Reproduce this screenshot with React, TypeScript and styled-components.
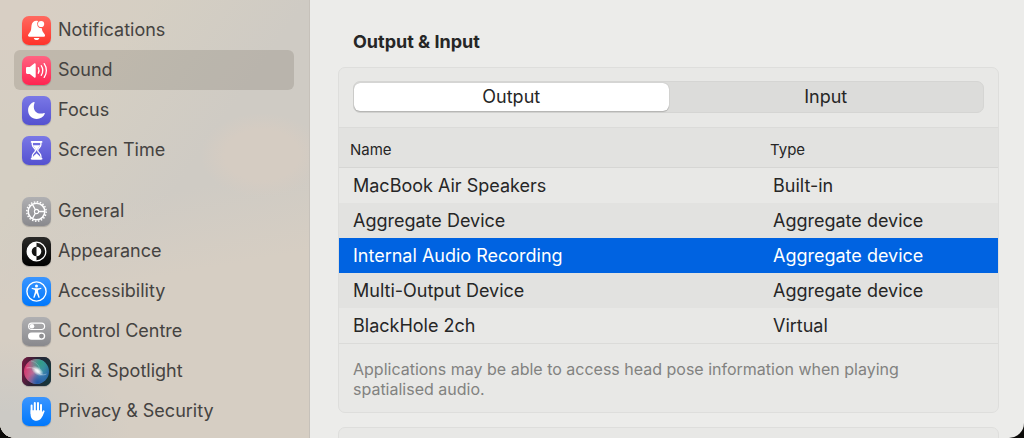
import React, { useState } from "react";
import styled, { createGlobalStyle } from "styled-components";

const GlobalStyle = createGlobalStyle`
  *, *::before, *::after { box-sizing: border-box; }
  html, body { margin: 0; background: #0b0a08; }
  body {
    font-family: Inter, "Liberation Sans", sans-serif;
    -webkit-font-smoothing: antialiased;
  }
`;

const Window = styled.div`
  display: flex;
  height: 100vh;
  overflow: hidden;
  border-radius: 0 0 15px 15px;
  background: #ececea;
`;

const Sidebar = styled.nav`
  flex: 0 0 310px;
  display: flex;
  flex-direction: column;
  gap: 21px;
  padding: 10px 15px 0 14px;
  border-right: 1px solid #c6c1ba;
  background:
    radial-gradient(ellipse 62px 42px at 262px 155px, #d5ccc2 0 60%, transparent 100%),
    radial-gradient(ellipse 130px 90px at 0 430px, #cccac5 0 20%, transparent 100%),
    radial-gradient(ellipse 170px 130px at 0 0, #d8cfc4 0 20%, transparent 100%),
    linear-gradient(170deg, transparent 0 45%, #d6cec3 62% 100%),
    linear-gradient(125deg, #d5cfc3 0 25%, #cfcbc4 50%);
`;

const NavGroup = styled.ul`
  margin: 0;
  padding: 0;
  list-style: none;
`;

const NavLink = styled.a<{ $active: boolean }>`
  display: flex;
  align-items: center;
  gap: 7px;
  height: 40px;
  padding: 0 8px;
  border-radius: 6px;
  background: ${(p) => (p.$active ? "rgba(60, 52, 40, 0.15)" : "transparent")};
  color: #454341;
  font-size: 18px;
  line-height: 24px;
  text-decoration: none;
  white-space: nowrap;
`;

const IconTile = styled.span<{ $from: string; $to: string }>`
  display: block;
  flex: none;
  width: 29px;
  height: 29px;
  overflow: hidden;
  border-radius: 7px;
  background: linear-gradient(${(p) => p.$from}, ${(p) => p.$to});
  box-shadow: 0 1px 1px rgba(0, 0, 0, 0.2);

  svg { display: block; }
`;

const Content = styled.main`
  flex: 1;
  min-width: 0;
  display: flex;
  flex-direction: column;
  padding: 30px 25px 0 28px;
`;

const Heading = styled.h2`
  margin: 0 0 13px 15px;
  color: #262626;
  font-size: 18px;
  font-weight: 700;
  line-height: 24px;
`;

const Card = styled.section`
  flex: none;
  margin-bottom: 14px;
  min-height: 48px;
  border: 1px solid #dededc;
  border-radius: 7px;
  background: #e8e8e6;
`;

const Segments = styled.div`
  display: flex;
  height: 32px;
  margin: 13px 14px 14px;
  padding: 1px 0;
  border: 1px solid #d5d5d3;
  border-radius: 7px;
  background: #dcdcda;
`;

const Segment = styled.button<{ $active: boolean }>`
  flex: 1;
  padding: 0;
  border: 0;
  border-radius: 6px;
  background: ${(p) => (p.$active ? "#fff" : "transparent")};
  box-shadow: ${(p) => (p.$active ? "0 0 1px rgba(0, 0, 0, 0.3), 0 1px 1px rgba(0, 0, 0, 0.16)" : "none")};
  color: #262626;
  font: inherit;
  font-size: 18px;
  line-height: 24px;
`;

const DeviceTable = styled.table`
  width: 100%;
  table-layout: fixed;
  border-collapse: separate;
  border-spacing: 0;
  text-align: left;
`;

const HeaderCell = styled.th<{ $width?: string }>`
  width: ${(p) => p.$width ?? "auto"};
  height: 41px;
  padding: 4px 11px 0;
  border-top: 1px solid #dbdbd9;
  border-bottom: 1px solid #d6d6d4;
  background: #e2e2e0;
  color: #262626;
  font-size: 15px;
  font-weight: 400;
  line-height: 20px;
`;

const DeviceRow = styled.tr<{ $selected: boolean }>`
  background: ${(p) => (p.$selected ? "#0063e1" : "transparent")};
  color: ${(p) => (p.$selected ? "#fff" : "#262626")};

  &:nth-child(even) { background: ${(p) => (p.$selected ? "#0063e1" : "#e2e2e0")}; }
`;

const Cell = styled.td`
  height: 35px;
  padding: 1px 14px 0;
  font-size: 18px;
  line-height: 24px;
`;

const Note = styled.p`
  margin: 0;
  padding: 15px 88px 13px 14px;
  border-top: 1px solid #dbdbd9;
  color: #828280;
  font-size: 16px;
  line-height: 20px;
`;

const Svg = ({ children }: { children: React.ReactNode }) => (
  <svg width="29" height="29" viewBox="0 0 29 29" fill="none" aria-hidden="true">
    {children}
  </svg>
);

const BellIcon = () => (
  <Svg>
    <path
      fill="#fff"
      d="M14.5 4.8c-2.6 0-4.7 2-5 4.8l-.4 4c-.2 1.700-.9 2.500-1.900 3.600-.8.900-1.200 1.500-1.200 2.300 0 .8.500 1.200 1.300 1.200h14.500c.8 0 1.300-.4 1.300-1.200 0-.8-.4-1.400-1.200-2.300-1-1.100-1.700-1.900-1.900-3.600l-.1-1.400a4.300 4.300 0 0 1-3.700-7.200 5 5 0 0 0-1.700-.2z"
    />
    <circle cx="19.100" cy="8" r="3.100" fill="#fff" />
    <path fill="#fff" d="M11.800 21.900h5.600c-.3 1.400-1.400 2.200-2.800 2.200s-2.500-.8-2.800-2.200z" />
  </Svg>
);

const SpeakerIcon = () => (
  <Svg>
    <path
      fill="#fff"
      d="M4 12.400c0-.8.500-1.300 1.300-1.300h2.500l4.400-3.600c.7-.6 1.500-.2 1.500.7v12.600c0 .9-.8 1.300-1.500.7l-4.400-3.600H5.300c-.8 0-1.300-.5-1.300-1.300z"
    />
    <g stroke="#fff" strokeWidth="1.300" strokeLinecap="round">
      <path d="M16.300 11.800c.9 1.600.9 3.800 0 5.400" />
      <path d="M19.200 9.700c1.900 2.800 1.900 6.800 0 9.600" />
      <path d="M22.200 7.600c2.900 4 2.900 9.800 0 13.800" />
    </g>
  </Svg>
);

const MoonIcon = () => (
  <Svg>
    <path
      fill="#fff"
      d="M11.900 6.100c.5-.2.9.2.7.7-.6 1.300-.8 2.500-.8 3.900 0 4.200 2.800 6.900 7 6.900 1.200 0 2.400-.2 3.300-.6.500-.2.900.2.700.7-1.300 3.200-4.400 5.200-8 5.200-5 0-8.700-3.700-8.700-8.600 0-3.700 2.300-6.900 5.800-8.200z"
    />
  </Svg>
);

const HourglassIcon = () => (
  <Svg>
    <path
      stroke="#fff"
      strokeWidth="1.300"
      strokeLinejoin="round"
      d="M10.300 6v2.800c0 2.600 3.200 3.800 3.200 5.600s-3.200 3-3.200 5.600v2.800h8.600V20c0-2.600-3.200-3.800-3.200-5.600s3.200-3 3.200-5.600V6z"
    />
    <path stroke="#fff" strokeWidth="1.700" strokeLinecap="round" d="M9.600 5.900h10M9.600 22.700h10" />
    <path fill="#fff" d="M11 9.300h7.200c-.6 2-2.900 2.900-3.100 5.100h-1c-.2-2.200-2.500-3.100-3.100-5.100zM14.600 17.200c1 1.800 3.500 2 3.700 4.700h-7.400c.2-2.700 2.700-2.900 3.700-4.700z" />
  </Svg>
);

const GearIcon = () => (
  <Svg>
    <circle cx="14.500" cy="14.500" r="9.700" stroke="#fff" strokeWidth="1.500" strokeDasharray="1.500 1.547" />
    <circle cx="14.500" cy="14.500" r="8.300" stroke="#fff" strokeWidth="1.500" />
    <circle cx="14.500" cy="14.500" r="2.100" stroke="#fff" strokeWidth="1.100" />
    <path stroke="#fff" strokeWidth="1.300" d="M16.600 14.500h6M13.400 12.700l-3-5.300M13.400 16.300l-3 5.300" />
  </Svg>
);

const AppearanceIcon = () => (
  <Svg>
    <circle cx="14.500" cy="14.500" r="9.300" stroke="#fff" strokeWidth="1.300" />
    <path fill="#fff" d="M14.500 5.200a9.300 9.300 0 0 0 0 18.600v-4.500a4.800 4.800 0 0 1 0-9.600z" />
    <path fill="#fff" d="M14.500 9.700a4.800 4.800 0 0 1 0 9.600z" />
  </Svg>
);

const AccessibilityIcon = () => (
  <Svg>
    <circle cx="14.500" cy="14.500" r="9.600" stroke="#fff" strokeWidth="1.400" />
    <circle cx="14.500" cy="9.100" r="1.500" fill="#fff" />
    <path
      fill="#fff"
      d="M9.600 11.300c.1-.4.500-.5.900-.4 2.700.6 5.300.6 8 0 .4-.1.800 0 .9.400.1.400-.2.700-.6.800l-2.700.8v2.200l1.500 5c.1.400-.1.700-.4.800-.4.100-.7-.1-.8-.4l-1.600-4h-.6l-1.600 4c-.1.300-.4.500-.8.400-.3-.1-.5-.4-.4-.8l1.500-5v-2.200l-2.700-.8c-.4-.1-.7-.4-.6-.8z"
    />
  </Svg>
);

const TogglesIcon = () => (
  <Svg>
    <rect x="6.600" y="6.100" width="16" height="6.400" rx="3.200" stroke="#fff" strokeWidth="1.200" />
    <circle cx="10" cy="9.300" r="2.300" fill="#fff" />
    <rect x="6" y="15.500" width="17.200" height="7.200" rx="3.600" fill="#fff" />
    <circle cx="19.500" cy="19.100" r="2.400" fill="#8f8f92" />
  </Svg>
);

const SiriIcon = () => (
  <Svg>
    <defs>
      <linearGradient id="siri-back" x1="0" y1="0" x2="1" y2="0.200">
        <stop offset="0" stopColor="#7c1741" />
        <stop offset="0.500" stopColor="#2b2336" />
        <stop offset="1" stopColor="#16343a" />
      </linearGradient>
      <linearGradient id="siri-orb" x1="0" y1="0.400" x2="1" y2="0.600">
        <stop offset="0" stopColor="#d5386c" />
        <stop offset="0.400" stopColor="#b8719b" />
        <stop offset="0.650" stopColor="#4b8fb8" />
        <stop offset="1" stopColor="#2567a3" />
      </linearGradient>
      <radialGradient id="siri-teal" cx="0.650" cy="0.150" r="0.500">
        <stop offset="0" stopColor="#2f9d85" />
        <stop offset="1" stopColor="#2f9d85" stopOpacity="0" />
      </radialGradient>
      <radialGradient id="siri-blue" cx="0.550" cy="0.950" r="0.450">
        <stop offset="0" stopColor="#2355a5" />
        <stop offset="1" stopColor="#2355a5" stopOpacity="0" />
      </radialGradient>
      <radialGradient id="siri-glow">
        <stop offset="0" stopColor="#fff" />
        <stop offset="0.350" stopColor="#fff" stopOpacity="0.800" />
        <stop offset="1" stopColor="#fff" stopOpacity="0" />
      </radialGradient>
    </defs>
    <rect width="29" height="29" fill="url(#siri-back)" />
    <circle cx="14.500" cy="14.500" r="12.500" fill="url(#siri-orb)" />
    <circle cx="14.500" cy="14.500" r="12.500" fill="url(#siri-teal)" />
    <circle cx="14.500" cy="14.500" r="12.500" fill="url(#siri-blue)" />
    <ellipse cx="15.500" cy="14" rx="7" ry="4" transform="rotate(35 15.500 14)" fill="url(#siri-glow)" />
    <path d="M4.500 11c5-1 9 0 12 4.500 2 2.500 4.500 3 8 1.500" stroke="#fff" strokeOpacity="0.350" />
    <path d="M9 4c5 1 8 4 9 9" stroke="#9fe3d6" strokeOpacity="0.350" />
  </Svg>
);

const HandIcon = () => (
  <Svg>
    <g stroke="#fff" strokeWidth="2" strokeLinecap="round">
      <path d="M9.600 8.600v8M12.800 6.100v9M16 5.900v9M19 8v9" />
      <path d="M21.600 14.400l-2.200 4.500" />
    </g>
    <path
      fill="#fff"
      d="M8.600 13.300h11.400v3l1.500.4c-.9 1.700-1.400 3.400-2.500 4.900-1.100 1.400-2.500 2.100-4.500 2.100-3.800 0-5.900-2.500-5.900-6.500z"
    />
  </Svg>
);

type Item = { label: string; from: string; to: string; Icon: () => React.ReactElement };

const groups: Item[][] = [
  [
    { label: "Notifications", from: "#ff6a60", to: "#ff3329", Icon: BellIcon },
    { label: "Sound", from: "#ff6482", to: "#ff2450", Icon: SpeakerIcon },
    { label: "Focus", from: "#7a78e6", to: "#5451d0", Icon: MoonIcon },
    { label: "Screen Time", from: "#7a78e6", to: "#5451d0", Icon: HourglassIcon },
  ],
  [
    { label: "General", from: "#b0b0b2", to: "#89898d", Icon: GearIcon },
    { label: "Appearance", from: "#2a2a28", to: "#000", Icon: AppearanceIcon },
    { label: "Accessibility", from: "#3a95ff", to: "#0078fc", Icon: AccessibilityIcon },
    { label: "Control Centre", from: "#b0b0b2", to: "#89898d", Icon: TogglesIcon },
    { label: "Siri & Spotlight", from: "#5b1d3c", to: "#1c2a48", Icon: SiriIcon },
    { label: "Privacy & Security", from: "#3a95ff", to: "#0078fc", Icon: HandIcon },
  ],
];

const devices = [
  { name: "MacBook Air Speakers", type: "Built-in" },
  { name: "Aggregate Device", type: "Aggregate device" },
  { name: "Internal Audio Recording", type: "Aggregate device" },
  { name: "Multi-Output Device", type: "Aggregate device" },
  { name: "BlackHole 2ch", type: "Virtual" },
];

export default function App() {
  const [tab, setTab] = useState("Output");
  const [device, setDevice] = useState("Internal Audio Recording");

  return (
    <>
      <GlobalStyle />
      <Window>
        <Sidebar aria-label="Settings">
          {groups.map((items) => (
            <NavGroup key={items[0].label}>
              {items.map(({ label, from, to, Icon }) => (
                <li key={label}>
                  <NavLink
                    href="#"
                    $active={label === "Sound"}
                    aria-current={label === "Sound" ? "page" : undefined}
                  >
                    <IconTile $from={from} $to={to}>
                      <Icon />
                    </IconTile>
                    {label}
                  </NavLink>
                </li>
              ))}
            </NavGroup>
          ))}
        </Sidebar>
        <Content>
          <Heading>Output &amp; Input</Heading>
          <Card>
            <Segments role="tablist" aria-label="Output & Input">
              {["Output", "Input"].map((name) => (
                <Segment
                  key={name}
                  type="button"
                  role="tab"
                  aria-selected={tab === name}
                  $active={tab === name}
                  onClick={() => setTab(name)}
                >
                  {name}
                </Segment>
              ))}
            </Segments>
            <DeviceTable>
              <thead>
                <tr>
                  <HeaderCell scope="col">Name</HeaderCell>
                  <HeaderCell scope="col" $width="239px">Type</HeaderCell>
                </tr>
              </thead>
              <tbody>
                {devices.map(({ name, type }) => (
                  <DeviceRow
                    key={name}
                    $selected={device === name}
                    aria-selected={device === name}
                    onClick={() => setDevice(name)}
                  >
                    <Cell>{name}</Cell>
                    <Cell>{type}</Cell>
                  </DeviceRow>
                ))}
              </tbody>
            </DeviceTable>
            <Note>
              Applications may be able to access head pose information when playing spatialised audio.
            </Note>
          </Card>
          <Card />
        </Content>
      </Window>
    </>
  );
}
